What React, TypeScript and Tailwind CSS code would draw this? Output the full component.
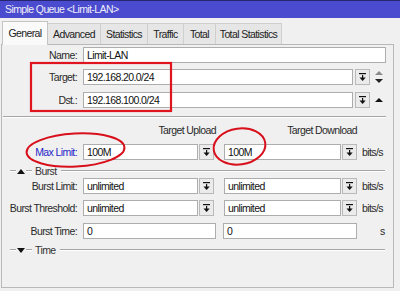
import React from 'react';

const tabs = [
    { name: 'General', w: 'w-[46px]' },
    { name: 'Advanced', w: 'w-[53px]' },
    { name: 'Statistics', w: 'w-[47px]' },
    { name: 'Traffic', w: 'w-[36px]' },
    { name: 'Total', w: 'w-[32px]' },
    { name: 'Total Statistics', w: 'w-[66px]' },
];

const DropGlyph = () => (
    <svg width="7" height="9" viewBox="0 0 7 9">
        <rect x="0" y="0" width="7" height="1.2" fill="#111" />
        <rect x="3" y="2" width="1.2" height="3" fill="#111" />
        <polygon points="0.5,4.5 6.7,4.5 3.6,8" fill="#111" />
    </svg>
);

const DropBtn = () => (
    <div className="w-[15px] h-[16px] bg-[#ebebeb] border border-[#b9b9b9] flex items-center justify-center">
        <DropGlyph />
    </div>
);

const Field = ({ value, className }: { value: string; className: string }) => (
    <div className={`h-[16px] bg-white border border-[#adadad] pl-[3px] flex items-center text-[#111] ${className}`}>
        {value}
    </div>
);

const Label = ({ text, blue }: { text: string; blue?: boolean }) => (
    <div className={`w-[75px] text-right shrink-0 whitespace-nowrap ${blue ? 'text-[#2525c8]' : 'text-[#2a2a2a]'}`}>
        {text}
    </div>
);

const Groove = ({ className }: { className: string }) => (
    <div className={`h-[2px] border-t border-[#a5a5a5] border-b border-b-white ${className}`} />
);

const Section = ({ title, open }: { title: string; open?: boolean }) => (
    <div className="flex items-center h-[10px] pl-[8px] pr-[8px]">
        <Groove className="w-[6px]" />
        <svg width="8" height="5" viewBox="0 0 8 5" className="mx-[1px]">
            {open ? <polygon points="0,0 8,0 4,5" fill="#111" /> : <polygon points="0,5 8,5 4,0" fill="#111" />}
        </svg>
        <Groove className="w-[6px]" />
        <span className="ml-[3px] mr-[4px] text-[#333]">{title}</span>
        <Groove className="flex-1" />
    </div>
);

export default function App() {
    return (
        <div className="relative w-[400px] h-[291px] overflow-hidden bg-[#f0f0f0] text-[10.5px] tracking-[-0.6px] leading-none font-['Liberation_Sans',Arial,sans-serif]">
            {/* title bar */}
            <div className="h-[18px] bg-[#4b4bd0] border-t border-[#26266e] pl-[5px] flex items-center text-[#eeeef8] whitespace-nowrap">
                Simple Queue &lt;Limit-LAN&gt;
            </div>

            {/* tabs */}
            <div className="h-[26px] flex items-end pl-[2px] whitespace-nowrap">
                {tabs.map((t, i) =>
                    i === 0 ? (
                        <div
                            key={t.name}
                            className={`${t.w} h-[24px] mb-[-1px] bg-[#fafafa] border border-b-0 border-[#c4c4c4] flex items-center justify-center text-[#222] relative z-10`}
                        >
                            {t.name}
                        </div>
                    ) : (
                        <div
                            key={t.name}
                            className={`${t.w} h-[21px] bg-[#e6e6e6] border border-l-0 border-b-0 border-[#cfcfcf] flex items-center justify-center text-[#222]`}
                        >
                            {t.name}
                        </div>
                    )
                )}
            </div>

            {/* panel */}
            <div className="ml-[1px] w-[393px] h-[244px] border border-[#b8b8b8] bg-[#f0f0f0] flex flex-col">
                <div className="flex items-center gap-[6px] mt-[2px]">
                    <Label text="Name:" />
                    <Field value="Limit-LAN" className="w-[303px]" />
                </div>
                <div className="flex items-center gap-[6px] mt-[6px]">
                    <Label text="Target:" />
                    <Field value="192.168.20.0/24" className="w-[270px]" />
                    <div className="flex items-center gap-[4px] ml-[-4px]">
                        <DropBtn />
                        <svg width="10" height="13" viewBox="0 0 10 13">
                            <polygon points="1,4 9,4 5,0" fill="#8a8a8a" />
                            <polygon points="1,8 9,8 5,12" fill="#222" />
                        </svg>
                    </div>
                </div>
                <div className="flex items-center gap-[6px] mt-[7px]">
                    <Label text="Dst.:" />
                    <Field value="192.168.100.0/24" className="w-[270px]" />
                    <div className="flex items-center gap-[4px] ml-[-4px]">
                        <DropBtn />
                        <svg width="10" height="6" viewBox="0 0 10 6">
                            <polygon points="1,5 9,5 5,1" fill="#111" />
                        </svg>
                    </div>
                </div>

                <Groove className="mt-[8px] ml-[1px] mr-[7px]" />

                <div className="flex items-center h-[12px] mt-[6px] text-[#2a2a2a] whitespace-nowrap">
                    <div className="w-[81px] shrink-0" />
                    <div className="w-[133px] text-right">Target Upload</div>
                    <div className="w-[141px] text-right">Target Download</div>
                </div>

                <div className="flex items-center mt-[8px]">
                    <Label text="Max Limit:" blue />
                    <Field value="100M" className="w-[115px] ml-[6px]" />
                    <div className="ml-[1px]">
                        <DropBtn />
                    </div>
                    <Field value="100M" className="w-[117px] ml-[10px]" />
                    <div className="ml-[1px]">
                        <DropBtn />
                    </div>
                    <span className="ml-[5px] text-[#2a2a2a]">bits/s</span>
                </div>

                <div className="mt-[6px]">
                    <Section title="Burst" />
                </div>

                <div className="flex items-center mt-[2px]">
                    <Label text="Burst Limit:" />
                    <Field value="unlimited" className="w-[115px] ml-[6px]" />
                    <div className="ml-[1px]">
                        <DropBtn />
                    </div>
                    <Field value="unlimited" className="w-[117px] ml-[10px]" />
                    <div className="ml-[1px]">
                        <DropBtn />
                    </div>
                    <span className="ml-[5px] text-[#2a2a2a]">bits/s</span>
                </div>
                <div className="flex items-center mt-[6px]">
                    <Label text="Burst Threshold:" />
                    <Field value="unlimited" className="w-[115px] ml-[6px]" />
                    <div className="ml-[1px]">
                        <DropBtn />
                    </div>
                    <Field value="unlimited" className="w-[117px] ml-[10px]" />
                    <div className="ml-[1px]">
                        <DropBtn />
                    </div>
                    <span className="ml-[5px] text-[#2a2a2a]">bits/s</span>
                </div>
                <div className="flex items-center mt-[7px]">
                    <Label text="Burst Time:" />
                    <Field value="0" className="w-[133px] ml-[6px]" />
                    <Field value="0" className="w-[134px] ml-[7px]" />
                    <span className="ml-[23px] text-[#2a2a2a]">s</span>
                </div>

                <div className="mt-[6px]">
                    <Section title="Time" open />
                </div>
            </div>

            {/* red annotations */}
            <svg className="absolute inset-0 pointer-events-none" width="400" height="291" viewBox="0 0 400 291">
                <rect x="31" y="63" width="140" height="48" fill="none" stroke="#e0141e" strokeWidth="2.2" />
                <ellipse cx="75.5" cy="150" rx="49" ry="16.5" fill="none" stroke="#d8101c" strokeWidth="2" transform="rotate(-3 75.5 150)" />
                <ellipse cx="239.5" cy="146.5" rx="26" ry="18" fill="none" stroke="#d8101c" strokeWidth="2" transform="rotate(-8 239.5 146.5)" />
            </svg>
        </div>
    );
}
